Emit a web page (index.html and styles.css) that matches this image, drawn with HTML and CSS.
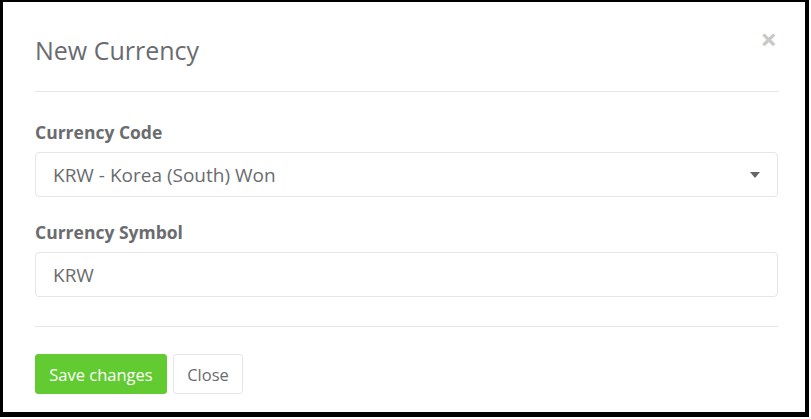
FILE: index.html
```html
<!DOCTYPE html>
<html lang="en">
<head>
<meta charset="utf-8">
<title>New Currency</title>
<link rel="stylesheet" href="styles.css">
</head>
<body>
<div class="modal">
  <div class="modal-header">
    <h4 class="modal-title">New Currency</h4>
    <button class="close" type="button" aria-label="Close">&times;</button>
  </div>
  <div class="modal-body">
    <div class="form-group">
      <label class="label">Currency Code</label>
      <div class="select">
        <span>KRW - Korea (South) Won</span>
        <svg class="caret" width="10" height="6" viewBox="0 0 10 6"><path d="M0 0H10L5 6Z" fill="#666"/></svg>
      </div>
    </div>
    <div class="form-group">
      <label class="label">Currency Symbol</label>
      <div class="input">KRW</div>
    </div>
  </div>
  <div class="modal-footer">
    <button class="btn btn-success" type="button">Save changes</button>
    <button class="btn btn-default" type="button">Close</button>
  </div>
</div>
</body>
</html>
```

FILE: styles.css
```css
html, body {
  margin: 0;
  padding: 0;
  background: #fff;
}
body {
  font-family: "Open Sans", "Liberation Sans", sans-serif;
  color: #6a6c6f;
}
.modal {
  box-sizing: border-box;
  width: 809px;
  height: 417px;
  border-style: solid;
  border-color: #000;
  border-width: 2px 4px 5px 3px;
  padding: 0 27px 0 32px;
  background: #fff;
}
.modal-header {
  position: relative;
  padding: 33px 0 26px;
  border-bottom: 1px solid #e4e5e7;
}
.modal-title {
  margin: 0;
  font-size: 25px;
  line-height: 30px;
  font-weight: 400;
  color: #6a6c6f;
}
.close {
  position: absolute;
  right: 1px;
  top: 23px;
  border: 0;
  background: none;
  padding: 0;
  font-family: "Open Sans", sans-serif;
  font-size: 29px;
  font-weight: 700;
  line-height: 28px;
  color: #c8c8c8;
}
.modal-body {
  padding: 30px 0 29px;
  border-bottom: 1px solid #e4e5e7;
}
.form-group + .form-group {
  margin-top: 25px;
}
.label {
  display: block;
  font-size: 17.5px;
  line-height: 20px;
  font-weight: 700;
  margin-bottom: 10px;
}
.select, .input {
  box-sizing: border-box;
  height: 45px;
  border: 1px solid #e4e5e7;
  border-radius: 4px;
  padding: 0 17px;
  font-size: 19px;
  display: flex;
  align-items: center;
  justify-content: space-between;
}
.caret {
  margin-right: 0;
}
.modal-footer {
  display: flex;
  gap: 6px;
  padding-top: 27px;
}
.btn {
  box-sizing: border-box;
  height: 40px;
  border-radius: 3px;
  font-family: "Open Sans", "Liberation Sans", sans-serif;
  font-size: 16.5px;
  padding: 0 10px;
  border: 1px solid transparent;
}
.btn-success {
  background: #62cb31;
  border-color: #62cb31;
  color: #fff;
  width: 132px;
}
.btn-default {
  background: #fff;
  border-color: #e4e5e7;
  color: #6a6c6f;
  width: 70px;
}
```
